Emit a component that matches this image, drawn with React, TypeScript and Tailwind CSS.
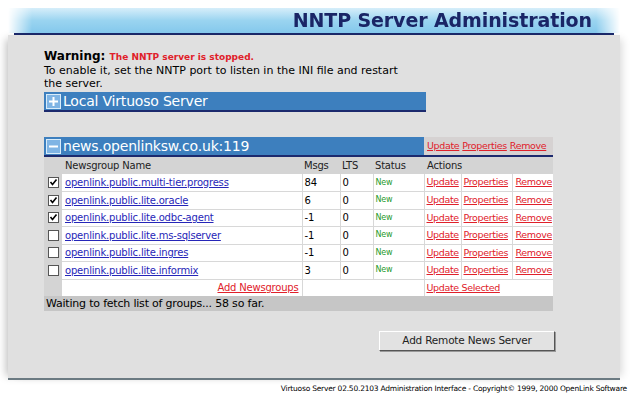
import React from 'react';

const groups = [
  { name: 'openlink.public.multi-tier.progress', msgs: '84', checked: true },
  { name: 'openlink.public.lite.oracle', msgs: '6', checked: true },
  { name: 'openlink.public.lite.odbc-agent', msgs: '-1', checked: true },
  { name: 'openlink.public.lite.ms-sqlserver', msgs: '-1', checked: false },
  { name: 'openlink.public.lite.ingres', msgs: '-1', checked: false },
  { name: 'openlink.public.lite.informix', msgs: '3', checked: false },
];

const Box: React.FC<{ minus?: boolean }> = ({ minus }) => (
  <svg width="15" height="15" viewBox="0 0 15 15" className="shrink-0">
    <rect x="0.5" y="0.5" width="14" height="14" fill="#7fb4e4" stroke="#d8ecfa" />
    <rect x="3" y="6.5" width="9" height="2" fill="#fff" />
    {!minus && <rect x="6.5" y="3" width="2" height="9" fill="#fff" />}
  </svg>
);

const Check: React.FC<{ on: boolean }> = ({ on }) => (
  <svg width="11" height="11" viewBox="0 0 11 11">
    <rect x="0.5" y="0.5" width="10" height="10" fill="#fff" stroke="#555" />
    {on && <path d="M2.5 5 L4.5 7.5 L8.5 2.5" stroke="#000" strokeWidth="1.6" fill="none" />}
  </svg>
);

const RedLink: React.FC<{ children: React.ReactNode }> = ({ children }) => (
  <span className="text-[#e0202a] underline">{children}</span>
);

export default function App() {
  return (
    <div className="w-[633px] h-[407px] bg-white font-['DejaVu_Sans',sans-serif] text-[11px] text-black overflow-hidden">
      <div className="pt-[8px] px-[8px] mr-[5px]">
        <div className="h-[25px] bg-gradient-to-b from-[#d6eefa] via-[#9ad4f0] to-[#84c8ec] [mask-image:linear-gradient(to_right,transparent,black_24px,black_calc(100%-24px),transparent)] flex items-center justify-end pr-[28px]">
          <span className="font-bold text-[19px] tracking-[-0.1px] text-[#1a2566] leading-none">NNTP Server Administration</span>
        </div>
        <div className="h-[2px] bg-[#1c2a6e] mx-[6px]" />
        <div className="h-[345px] bg-[#e0e0e0] shadow-[-6px_0_8px_-4px_rgba(0,0,0,0.25),6px_0_8px_-4px_rgba(0,0,0,0.15)] border-b-[2px] border-[#6b7a82] pl-[36px] pt-[15px] flex flex-col">
          <div className="leading-[13px] w-[354px]">
            <span className="font-bold text-[12px]">Warning: </span>
            <span className="font-bold text-[9px] text-[#e0202a]">The NNTP server is stopped.</span>
            <div className="text-[11px]">To enable it, set the NNTP port to listen in the INI file and restart the server.</div>
          </div>
          <div className="w-[380px] mt-[2px] h-[18px] bg-[#3d7fbe] flex items-center gap-[2px] pl-[2px] text-white text-[14px] tracking-[-0.2px] border-b-[2px] border-[#1c2a6e] box-content">
            <Box />
            <span>Local Virtuoso Server</span>
          </div>
          <div className="w-[509px] mt-[25px]">
            <div className="flex h-[18px] border-b-[2px] border-[#1c2a6e] box-content">
              <div className="w-[380px] bg-[#3d7fbe] flex items-center gap-[2px] pl-[2px] text-white text-[14px] tracking-[-0.2px]">
                <Box minus />
                <span>news.openlinksw.co.uk:119</span>
              </div>
              <div className="flex-1 bg-[#d6d2d2] flex items-center gap-[3px] pl-[3px] text-[9.5px] tracking-[-0.35px]">
                <RedLink>Update</RedLink>
                <RedLink>Properties</RedLink>
                <RedLink>Remove</RedLink>
              </div>
            </div>
            <table className="w-[509px] border-collapse text-[10px] tracking-[-0.2px] table-fixed">
              <colgroup>
                <col className="w-[18px]" />
                <col className="w-[240px]" />
                <col className="w-[38px]" />
                <col className="w-[33px]" />
                <col className="w-[51px]" />
                <col className="w-[37px]" />
                <col className="w-[51px]" />
                <col className="w-[41px]" />
              </colgroup>
              <thead>
                <tr className="h-[17px] bg-[#d4d4d4] text-[#222]">
                  <td />
                  <td className="pl-[3px]">Newsgroup Name</td>
                  <td className="pl-[2px]">Msgs</td>
                  <td className="pl-[2px]">LTS</td>
                  <td className="pl-[2px]">Status</td>
                  <td colSpan={3} className="pl-[3px]">Actions</td>
                </tr>
              </thead>
              <tbody>
                {groups.map((g) => (
                  <tr key={g.name} className="h-[17.5px]">
                    <td className="bg-[#d4d4d4] pl-[4px] align-middle">
                      <div className="flex"><Check on={g.checked} /></div>
                    </td>
                    <td className="bg-white pl-[3px] border-b border-[#d8d8d8]">
                      <span className="text-[#2626b8] underline">{g.name}</span>
                    </td>
                    <td className="bg-white pl-[2px] border-b border-l border-[#d8d8d8]">{g.msgs}</td>
                    <td className="bg-white pl-[2px] border-b border-l border-[#d8d8d8]">0</td>
                    <td className="bg-white pl-[2px] border-b border-l border-[#d8d8d8] text-[8px] text-[#1f9a2a]">New</td>
                    <td className="bg-white pl-[2px] border-b border-l border-[#d8d8d8] text-[9.5px] tracking-[-0.35px] whitespace-nowrap"><RedLink>Update</RedLink></td>
                    <td className="bg-white pl-[2px] border-b border-l border-[#d8d8d8] text-[9.5px] tracking-[-0.35px] whitespace-nowrap"><RedLink>Properties</RedLink></td>
                    <td className="bg-white pl-[3px] border-b border-l border-[#d8d8d8] text-[9.5px] tracking-[-0.35px] whitespace-nowrap"><RedLink>Remove</RedLink></td>
                  </tr>
                ))}
                <tr className="h-[17px]">
                  <td className="bg-[#d4d4d4]" />
                  <td className="bg-white text-right pr-[3px]"><RedLink>Add Newsgroups</RedLink></td>
                  <td colSpan={3} className="bg-white border-l border-[#d8d8d8]" />
                  <td colSpan={3} className="bg-white pl-[2px] border-l border-[#d8d8d8] text-[9.5px] tracking-[-0.35px]"><RedLink>Update Selected</RedLink></td>
                </tr>
                <tr className="h-[15px] bg-[#c6c6c6]">
                  <td colSpan={8} className="pl-[2px] text-[11px] leading-[15px]">Waiting to fetch list of groups... 58 so far.</td>
                </tr>
              </tbody>
            </table>
          </div>
          <div className="w-[511px] flex justify-end mt-[20px]">
            <button className="w-[176px] h-[20px] bg-[#e2e2e2] border border-t-white border-l-white border-r-[#555] border-b-[#555] shadow-[1px_1px_0_#999] text-[10.5px] tracking-[-0.2px] text-[#222]">
              Add Remote News Server
            </button>
          </div>
        </div>
        <div className="flex justify-end mt-[3px] mr-[-7px]">
          <span className="text-[7.5px] tracking-[-0.22px] text-black">Virtuoso Server 02.50.2103 Administration Interface - Copyright© 1999, 2000 OpenLink Software</span>
        </div>
      </div>
    </div>
  );
}
